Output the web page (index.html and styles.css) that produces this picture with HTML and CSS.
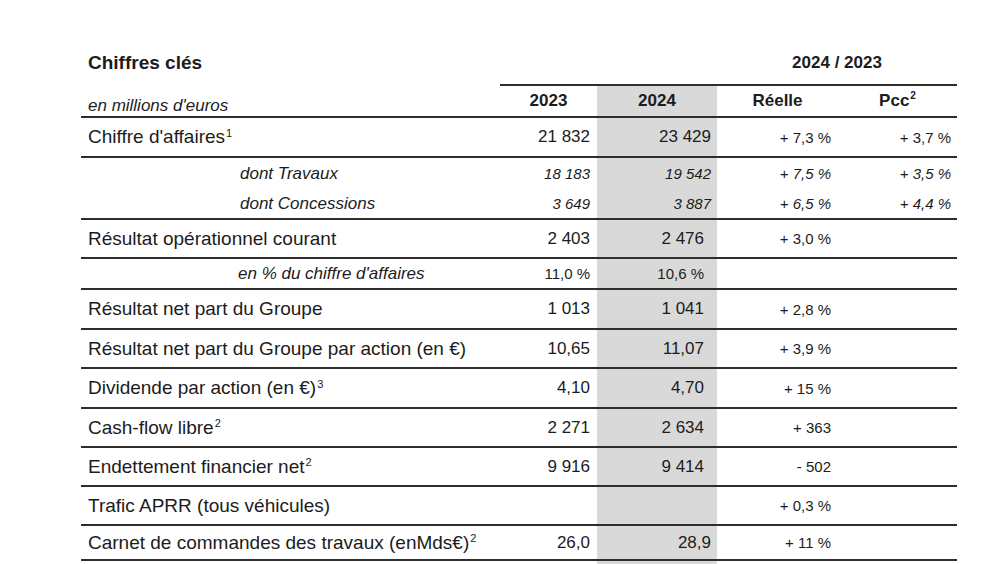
FILE: index.html
```html
<!DOCTYPE html>
<html lang="fr">
<head>
<meta charset="utf-8">
<title>Chiffres clés</title>
<link rel="stylesheet" href="styles.css">
</head>
<body>
<div class="sheet">
  <div class="title-row">
    <div class="title">Chiffres clés</div>
    <div class="period">2024 / 2023</div>
  </div>

  <div class="row head">
    <div class="c unit">en millions d'euros</div>
    <div class="c h top">2023</div>
    <div class="c h top gray">2024</div>
    <div class="c h top">Réelle</div>
    <div class="c h top"><span>Pcc<sup>2</sup></span></div>
  </div>

  <div class="row tall">
    <div class="c lbl"><span>Chiffre d'affaires<sup>1</sup></span></div>
    <div class="c v">21 832</div>
    <div class="c v gray">23 429</div>
    <div class="c p">+ 7,3 %</div>
    <div class="c q">+ 3,7 %</div>
  </div>

  <div class="row sub noline">
    <div class="c slbl">dont Travaux</div>
    <div class="c sv">18 183</div>
    <div class="c sv gray">19 542</div>
    <div class="c p it">+ 7,5 %</div>
    <div class="c q it">+ 3,5 %</div>
  </div>
  <div class="row sub2">
    <div class="c slbl">dont Concessions</div>
    <div class="c sv">3 649</div>
    <div class="c sv gray">3 887</div>
    <div class="c p it">+ 6,5 %</div>
    <div class="c q it">+ 4,4 %</div>
  </div>

  <div class="row">
    <div class="c lbl">Résultat opérationnel courant</div>
    <div class="c v">2 403</div>
    <div class="c v gray in">2 476</div>
    <div class="c p">+ 3,0 %</div>
    <div class="c q"></div>
  </div>

  <div class="row short">
    <div class="c slbl pct">en % du chiffre d'affaires</div>
    <div class="c sv up">11,0 %</div>
    <div class="c sv up gray in">10,6 %</div>
    <div class="c p"></div>
    <div class="c q"></div>
  </div>

  <div class="row tall">
    <div class="c lbl">Résultat net part du Groupe</div>
    <div class="c v">1 013</div>
    <div class="c v gray in">1 041</div>
    <div class="c p">+ 2,8 %</div>
    <div class="c q"></div>
  </div>

  <div class="row">
    <div class="c lbl">Résultat net part du Groupe par action (en €)</div>
    <div class="c v">10,65</div>
    <div class="c v gray in">11,07</div>
    <div class="c p">+ 3,9 %</div>
    <div class="c q"></div>
  </div>

  <div class="row tall">
    <div class="c lbl"><span>Dividende par action (en €)<sup>3</sup></span></div>
    <div class="c v">4,10</div>
    <div class="c v gray in">4,70</div>
    <div class="c p">+ 15 %</div>
    <div class="c q"></div>
  </div>

  <div class="row">
    <div class="c lbl"><span>Cash-flow libre<sup>2</sup></span></div>
    <div class="c v">2 271</div>
    <div class="c v gray in">2 634</div>
    <div class="c p">+ 363</div>
    <div class="c q"></div>
  </div>

  <div class="row">
    <div class="c lbl"><span>Endettement financier net<sup>2</sup></span></div>
    <div class="c v">9 916</div>
    <div class="c v gray in">9 414</div>
    <div class="c p">- 502</div>
    <div class="c q"></div>
  </div>

  <div class="row">
    <div class="c lbl">Trafic APRR (tous véhicules)</div>
    <div class="c v"></div>
    <div class="c v gray"></div>
    <div class="c p">+ 0,3 %</div>
    <div class="c q"></div>
  </div>

  <div class="row last">
    <div class="c lbl"><span>Carnet de commandes des travaux (enMds€)<sup>2</sup></span></div>
    <div class="c v">26,0</div>
    <div class="c v gray">28,9</div>
    <div class="c p">+ 11 %</div>
    <div class="c q"></div>
  </div>

  <div class="tail">
    <div></div><div></div><div class="gray"></div><div></div><div></div>
  </div>
</div>
</body>
</html>
```

FILE: styles.css
```css
html, body {
  margin: 0;
  padding: 0;
  background: #ffffff;
}

body {
  font-family: "Liberation Sans", Arial, sans-serif;
  color: #1c1c1c;
  overflow: hidden;
}

.sheet {
  margin-left: 81px;
  width: 876px;
}

.title-row,
.row,
.tail {
  display: grid;
  grid-template-columns: 419px 97px 120px 121px 119px;
}

.title-row {
  height: 84px;
  box-sizing: border-box;
  padding-top: 52px;
  line-height: 22px;
  font-weight: bold;
}

.title {
  grid-column: 1;
  padding-left: 7px;
  font-size: 19px;
}

.period {
  grid-column: 4 / 6;
  text-align: center;
  font-size: 17px;
}

.row {
  box-sizing: border-box;
  height: 39px;
  border-bottom: 2px solid #2e2e2e;
}

.row.tall { height: 40px; }
.row.short { height: 31px; }
.row.last { height: 35px; }
.row.head { height: 34px; }
.row.sub { height: 30px; }
.row.sub2 { height: 32px; }
.row.noline { border-bottom: none; }

.tail { height: 10px; }

.c {
  display: flex;
  align-items: center;
  white-space: nowrap;
  min-width: 0;
}

.gray { background: #d9d9d9; }

.top { border-top: 2px solid #2e2e2e; }

.unit {
  align-items: flex-end;
  padding-left: 7px;
  padding-bottom: 1px;
  font-size: 17px;
  font-style: italic;
  line-height: 18px;
}

.h {
  justify-content: center;
  font-size: 17px;
  font-weight: bold;
}

.lbl {
  padding-left: 7px;
  font-size: 19px;
}

.slbl {
  padding-left: 159px;
  padding-top: 2px;
  font-size: 17px;
  font-style: italic;
}

.slbl.pct { padding-left: 157px; padding-top: 0; }

.v {
  justify-content: flex-end;
  padding-right: 7px;
  font-size: 17px;
}

.v.gray { padding-right: 6px; }
.v.gray.in,
.sv.gray.in { padding-right: 13px; }

.sv {
  justify-content: flex-end;
  padding-right: 7px;
  font-size: 15px;
  font-style: italic;
}

.sv.gray { padding-right: 6px; }
.sv.up { font-style: normal; }

.p {
  justify-content: flex-end;
  padding-right: 7px;
  font-size: 15px;
}

.q {
  justify-content: flex-end;
  padding-right: 6px;
  font-size: 15px;
}

.it { font-style: italic; }

sup {
  font-size: 11px;
  line-height: 0;
  vertical-align: 0.55em;
  margin-left: 1px;
}

.h sup { font-size: 10px; vertical-align: 0.75em; }
```
